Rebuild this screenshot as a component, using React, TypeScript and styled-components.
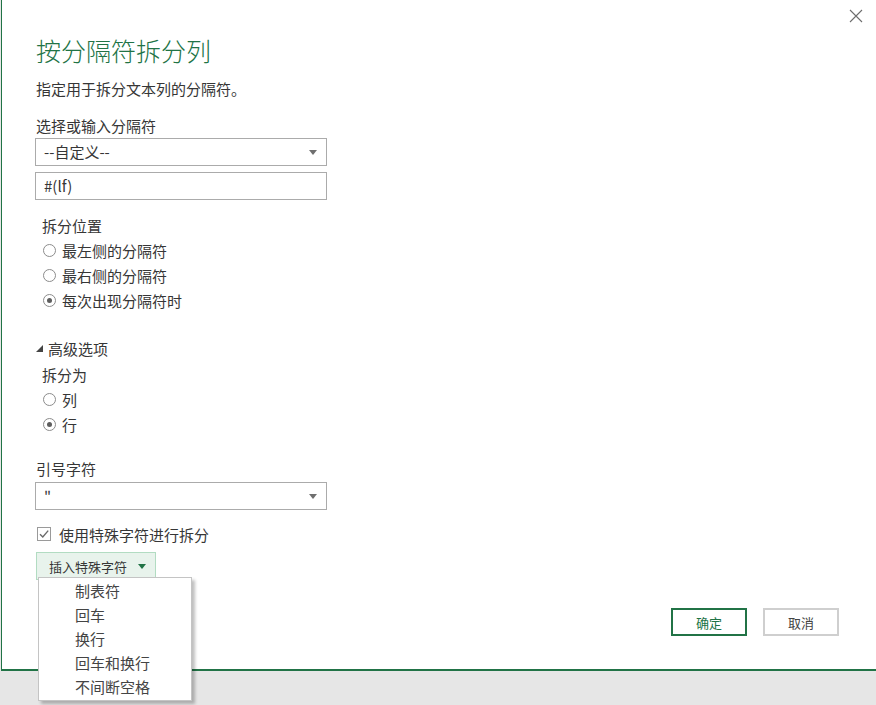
import * as React from 'react'
import styled, { createGlobalStyle } from 'styled-components'

const GlobalStyle = createGlobalStyle`
  html, body {
    margin: 0;
    padding: 0;
    background: #ffffff;
  }
  body {
    font-family: "Noto Sans CJK SC", "Noto Sans", "Liberation Sans", sans-serif;
    color: #363636;
  }
`

const colors = {
  green: '#217346',
  text: '#363636',
  border: '#ababab',
  radio: '#8c8c8c',
}

const Page = styled.div`
  display: flex;
  flex-direction: column;
  width: 876px;
  height: 705px;
  overflow: hidden;
  background: #e6e6e6;
`

const Dialog = styled.div`
  position: relative;
  display: flex;
  flex-direction: column;
  height: 671px;
  margin-left: 1px;
  padding: 34px 37px 33px 33px;
  box-sizing: border-box;
  background: #fff;
  border-left: 1px solid ${colors.green};
  border-bottom: 2px solid ${colors.green};
`

const CloseButton = styled.div`
  position: absolute;
  top: 9px;
  right: 13px;
  width: 14px;
  height: 14px;
  display: flex;
`

const Title = styled.h1`
  margin: 0 0 0 1px;
  font-size: 25px;
  line-height: 32px;
  font-weight: 300;
  color: ${colors.green};
`

const Subtitle = styled.p`
  margin: 13px 0 0 1px;
  font-size: 15px;
  line-height: 20px;
`

interface LabelProps {
  indent?: boolean
  top: number
}

const Label = styled.div<LabelProps>`
  margin: ${(p) => p.top}px 0 0 ${(p) => (p.indent ? 7 : 1)}px;
  font-size: 15px;
  line-height: 20px;
`

const Field = styled.div<{ top: number }>`
  display: flex;
  align-items: center;
  justify-content: space-between;
  width: 292px;
  height: 28px;
  margin-top: ${(p) => p.top}px;
  padding: 0 9px 0 8px;
  box-sizing: border-box;
  border: 1px solid ${colors.border};
  font-size: 15px;
  line-height: 20px;
  color: ${colors.text};
`

const Caret = styled.span<{ color?: string }>`
  width: 0;
  height: 0;
  border-left: 4px solid transparent;
  border-right: 4px solid transparent;
  border-top: 5px solid ${(p) => p.color || '#6f6f6f'};
`

const RadioGroup = styled.div`
  display: flex;
  flex-direction: column;
  margin: 2px 0 0 8px;
`

const RadioRow = styled.label`
  display: flex;
  align-items: center;
  height: 25px;
  gap: 6px;
  font-size: 15px;
`

const RadioCircle = styled.span<{ checked?: boolean }>`
  display: flex;
  align-items: center;
  justify-content: center;
  width: 11px;
  height: 11px;
  border: 1px solid ${colors.radio};
  border-radius: 50%;
  background: #fff;

  &::after {
    content: '';
    width: 5px;
    height: 5px;
    border-radius: 50%;
    background: ${(p) => (p.checked ? '#5e5e5e' : 'transparent')};
  }
`

const Expander = styled.div`
  display: flex;
  align-items: center;
  gap: 4px;
  margin: 26px 0 0 1px;
  font-size: 15px;
  line-height: 20px;
`

const CheckRow = styled.label`
  display: flex;
  align-items: center;
  gap: 8px;
  margin: 14px 0 0 2px;
  height: 20px;
  font-size: 15px;
`

const CheckBox = styled.span`
  display: flex;
  width: 12px;
  height: 12px;
  border: 1px solid #9a9a9a;
`

const InsertWrap = styled.div`
  position: relative;
  align-self: flex-start;
  margin: 8px 0 0 1px;
`

const InsertButton = styled.div`
  display: flex;
  align-items: center;
  gap: 11px;
  height: 28px;
  padding: 0 9px 0 12px;
  box-sizing: border-box;
  white-space: nowrap;
  background: #e8f3ec;
  border: 1px solid #b2dcc2;
  font-size: 13px;
`

const Menu = styled.ul`
  position: absolute;
  top: 25px;
  left: 2px;
  width: 154px;
  margin: 0;
  padding: 1px 0;
  list-style: none;
  box-sizing: border-box;
  background: #fff;
  border: 1px solid #c4c4c4;
  box-shadow: 3px 3px 3px rgba(0, 0, 0, 0.25);
  z-index: 2;
`

const MenuItem = styled.li`
  height: 24px;
  line-height: 24px;
  padding-left: 36px;
  font-size: 15px;
  color: #444;
  white-space: nowrap;
`

const Footer = styled.div`
  display: flex;
  justify-content: flex-end;
  gap: 16px;
  margin-top: auto;
`

const Button = styled.button<{ primary?: boolean }>`
  width: 76px;
  height: 28px;
  padding: 0;
  background: #fff;
  border: ${(p) => (p.primary ? `2px solid ${colors.green}` : '2px solid #cfcfcf')};
  font-family: inherit;
  font-size: 13px;
  color: ${(p) => (p.primary ? colors.green : '#444')};
`

const Radio: React.FunctionComponent<{ checked?: boolean; label: string }> = ({
  checked,
  label,
}) => (
  <RadioRow>
    <RadioCircle checked={checked} />
    {label}
  </RadioRow>
)

const specialChars = ['制表符', '回车', '换行', '回车和换行', '不间断空格']

const App: React.FunctionComponent = () => {
  return (
    <Page>
      <GlobalStyle />
      <Dialog>
        <CloseButton>
          <svg width="14" height="14" viewBox="0 0 14 14">
            <path d="M1 1 L13 13 M13 1 L1 13" stroke="#6d6d6d" strokeWidth="1.1" />
          </svg>
        </CloseButton>
        <Title>按分隔符拆分列</Title>
        <Subtitle>指定用于拆分文本列的分隔符。</Subtitle>

        <Label top={17}>选择或输入分隔符</Label>
        <Field top={2}>
          <span>--自定义--</span>
          <Caret />
        </Field>
        <Field top={6}>#(lf)</Field>

        <Label top={16} indent>
          拆分位置
        </Label>
        <RadioGroup>
          <Radio label="最左侧的分隔符" />
          <Radio label="最右侧的分隔符" />
          <Radio checked label="每次出现分隔符时" />
        </RadioGroup>

        <Expander>
          <svg width="8" height="8" viewBox="0 0 8 8">
            <polygon points="7,0 7,7 0,7" fill="#444" />
          </svg>
          高级选项
        </Expander>
        <Label top={6} indent>
          拆分为
        </Label>
        <RadioGroup>
          <Radio label="列" />
          <Radio checked label="行" />
        </RadioGroup>

        <Label top={22}>引号字符</Label>
        <Field top={3}>
          <span>"</span>
          <Caret />
        </Field>

        <CheckRow>
          <CheckBox>
            <svg width="12" height="12" viewBox="0 0 12 12">
              <path d="M2 6.2 L4.8 9 L10.2 2.6" fill="none" stroke="#6a6a6a" strokeWidth="1.4" />
            </svg>
          </CheckBox>
          使用特殊字符进行拆分
        </CheckRow>

        <InsertWrap>
          <InsertButton>
            插入特殊字符
            <Caret color={colors.green} />
          </InsertButton>
          <Menu>
            {specialChars.map((item) => (
              <MenuItem key={item}>{item}</MenuItem>
            ))}
          </Menu>
        </InsertWrap>

        <Footer>
          <Button primary>确定</Button>
          <Button>取消</Button>
        </Footer>
      </Dialog>
    </Page>
  )
}

export default App
